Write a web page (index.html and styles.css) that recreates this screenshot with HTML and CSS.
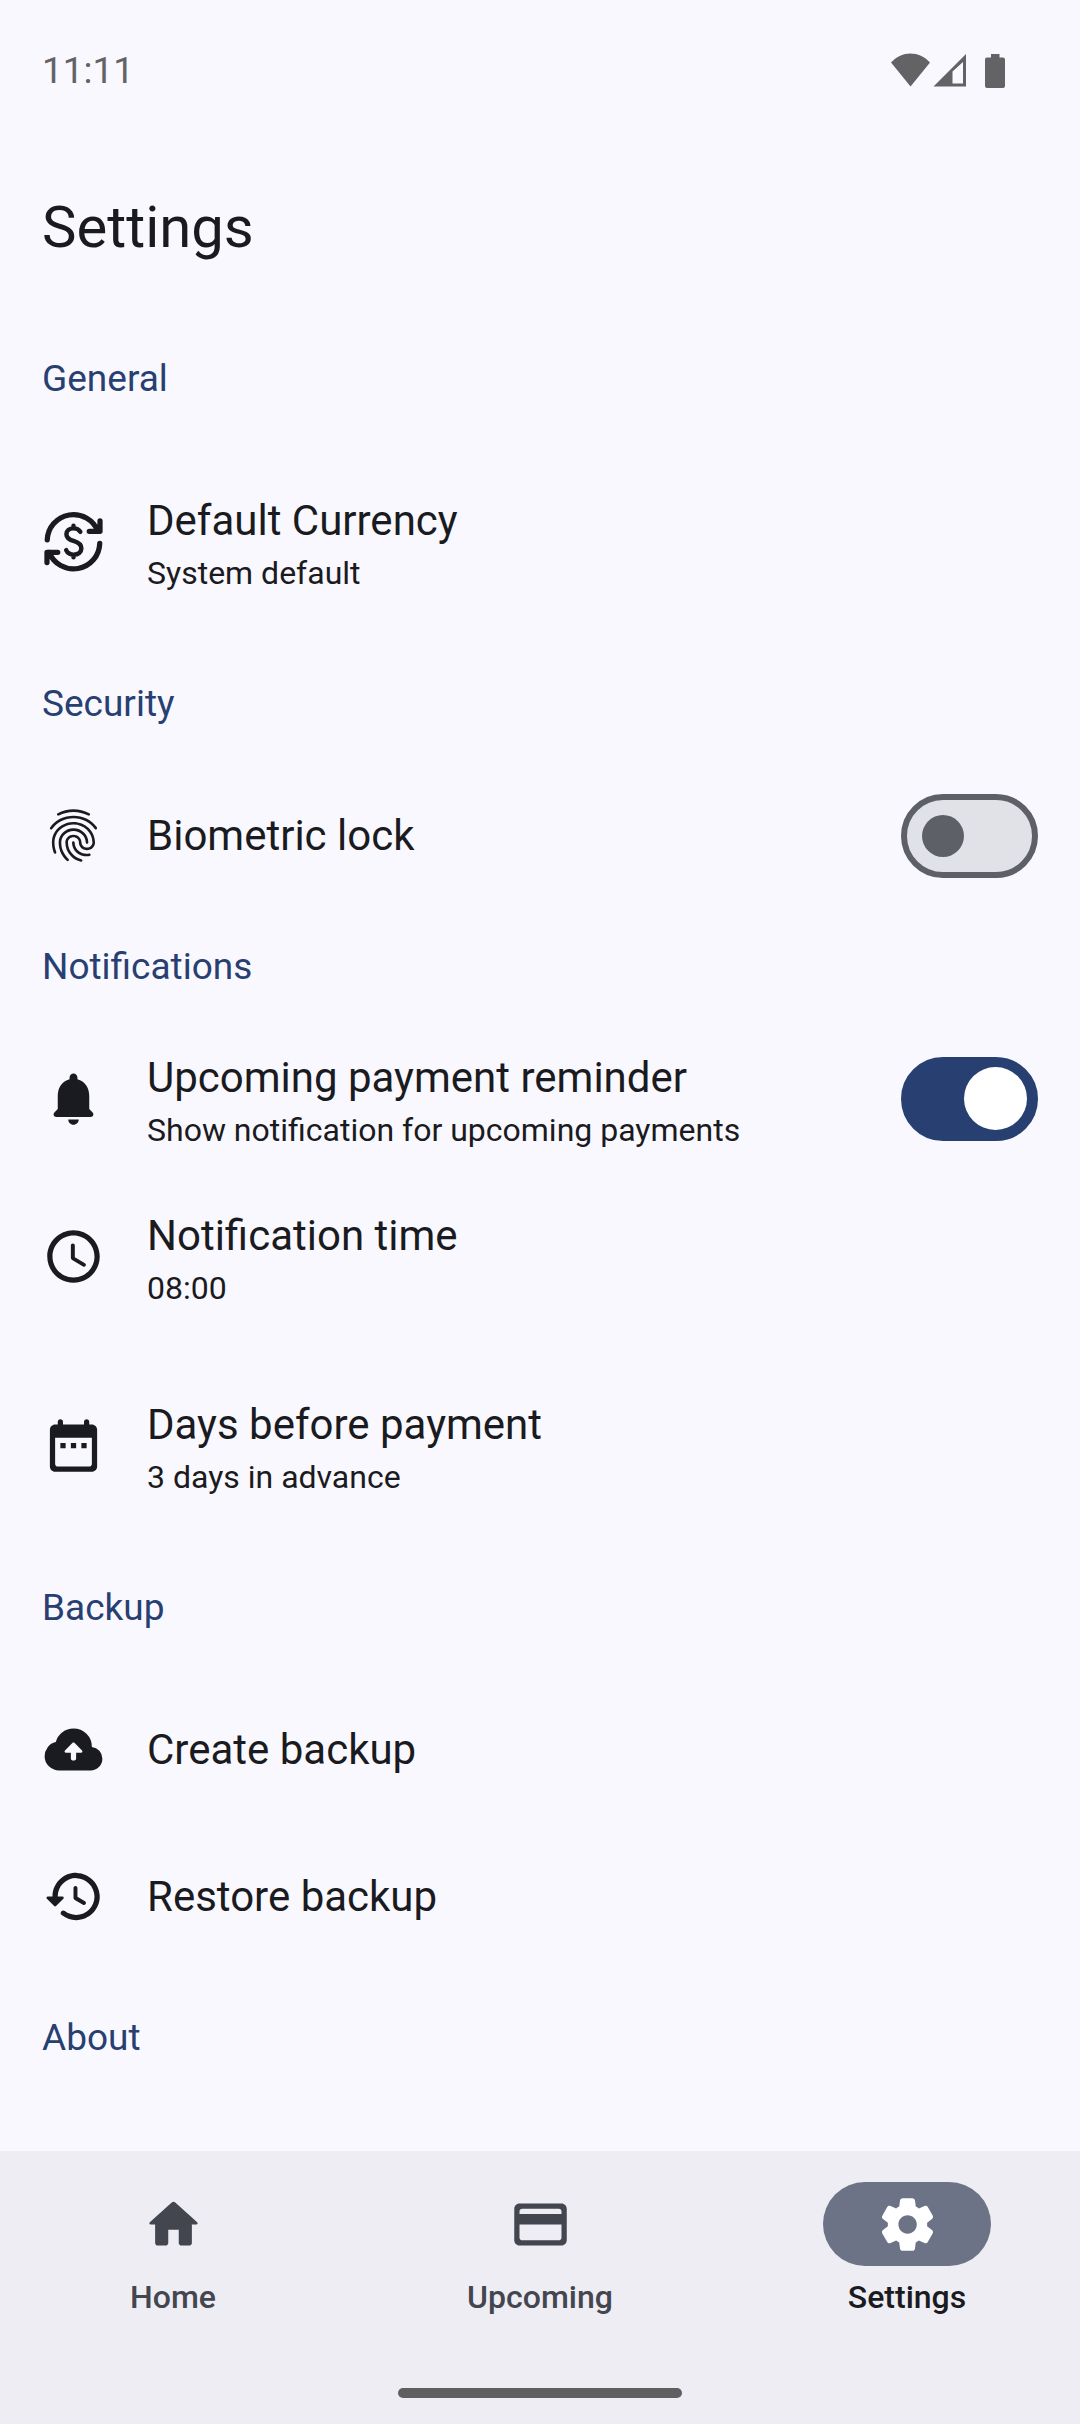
FILE: index.html
```html
<!DOCTYPE html>
<html lang="en">
<head>
<meta charset="utf-8">
<meta name="viewport" content="width=device-width, initial-scale=1">
<title>Settings</title>
<link rel="stylesheet" href="styles.css">
</head>
<body>
<div class="status-bar">
  <span class="clock">11:11</span>
  <svg class="status-icons" viewBox="0 1 116 36" aria-hidden="true">
    <path d="M1 10.500C12-1.500 29-1.500 40 10.500L20.500 34.500z"/>
    <path fill-rule="evenodd" d="M43.500 34.500L76 2V34.500zM62.500 19.500V31.500H73V10z"/>
    <path d="M101 2h8.500v3.500H113a2 2 0 0 1 2 2V34a2 2 0 0 1-2 2H97a2 2 0 0 1-2-2V7.500a2 2 0 0 1 2-2h4z"/>
  </svg>
</div>
<header class="app-bar"><h1 class="app-title">Settings</h1></header>

<main class="content">
  <section>
    <h2 class="section-label">General</h2>
    <button class="row row-tall" type="button">
      <svg class="icon icon-line" viewBox="0 0 24 24" aria-hidden="true">
        <path d="M2 11.400A10 10 0 0 1 21.300 8.100M22.100 4.100V8.100H18M22 12.700A10 10 0 0 1 2.700 16.100M1.900 20V16.100H6"/>
        <path stroke-width="1.700" d="M14.600 8.300C14.100 7.500 13.200 7 12 7c-1.600 0-2.700.9-2.700 2.200 0 1.500 1.200 2.100 2.700 2.600 1.900.6 3 1.300 3 2.800 0 1.500-1.200 2.400-2.900 2.400-1.500 0-2.400-.6-2.900-1.700M12 6v1M12 17v1"/>
      </svg>
      <span class="row-text"><span class="row-title">Default Currency</span><span class="row-sub">System default</span></span>
    </button>
  </section>

  <section>
    <h2 class="section-label">Security</h2>
    <label class="row row-switch">
      <svg class="icon" viewBox="0 0 24 24" aria-hidden="true"><path d="M17.810 4.470c-.08 0-.16-.02-.23-.06C15.660 3.420 14 3 12.010 3c-1.980 0-3.860.47-5.570 1.410-.24.13-.54.04-.68-.2-.13-.24-.04-.55.2-.68C7.820 2.520 9.860 2 12.010 2c2.130 0 3.990.47 6.030 1.520.25.13.34.43.21.67-.09.18-.26.28-.44.28zM3.500 9.720c-.1 0-.2-.03-.29-.09-.23-.16-.28-.47-.12-.7.99-1.400 2.250-2.500 3.750-3.270C9.980 4.040 14 4.030 17.150 5.650c1.500.77 2.760 1.860 3.750 3.250.16.22.11.54-.12.7-.23.16-.54.11-.7-.12-.9-1.260-2.040-2.250-3.390-2.940-2.870-1.470-6.540-1.470-9.400.01-1.360.7-2.500 1.700-3.400 2.960-.08.14-.23.21-.39.21zm6.250 12.070c-.13 0-.26-.05-.35-.15-.87-.87-1.340-1.430-2.010-2.640-.69-1.230-1.050-2.730-1.050-4.340 0-2.970 2.540-5.390 5.660-5.390s5.660 2.420 5.660 5.390c0 .28-.22.5-.5.5s-.5-.22-.5-.5c0-2.420-2.090-4.390-4.660-4.390-2.570 0-4.660 1.970-4.660 4.390 0 1.440.32 2.770.93 3.850.64 1.150 1.080 1.640 1.850 2.420.19.2.19.51 0 .71-.11.1-.24.15-.37.15zm7.170-1.850c-1.190 0-2.240-.3-3.100-.89-1.490-1.010-2.380-2.650-2.380-4.390 0-.28.22-.5.5-.5s.5.22.5.5c0 1.410.72 2.740 1.940 3.560.71.48 1.540.71 2.540.71.24 0 .64-.03 1.040-.1.27-.05.53.13.58.41.05.27-.13.53-.41.58-.57.11-1.070.12-1.210.12zM14.910 22c-.04 0-.09-.01-.13-.02-1.590-.44-2.630-1.030-3.720-2.100-1.400-1.390-2.170-3.240-2.170-5.220 0-1.620 1.380-2.940 3.080-2.940 1.700 0 3.080 1.320 3.080 2.940 0 1.070.93 1.940 2.080 1.940s2.080-.87 2.080-1.940c0-3.770-3.250-6.830-7.250-6.830-2.840 0-5.440 1.580-6.610 4.030-.39.81-.59 1.760-.59 2.800 0 .78.07 2.010.67 3.610.1.26-.03.55-.29.64-.26.1-.55-.04-.64-.29-.49-1.310-.73-2.610-.73-3.960 0-1.200.23-2.290.68-3.240 1.330-2.790 4.280-4.600 7.510-4.600 4.550 0 8.250 3.510 8.250 7.830 0 1.620-1.380 2.940-3.080 2.940s-3.080-1.320-3.080-2.940c0-1.070-.93-1.940-2.080-1.940s-2.080.87-2.080 1.940c0 1.710.66 3.310 1.870 4.510.95.94 1.860 1.460 3.270 1.850.27.07.42.35.35.61-.05.23-.26.38-.47.38z"/></svg>
      <span class="row-text"><span class="row-title">Biometric lock</span></span>
      <input class="switch" type="checkbox" role="switch">
    </label>
  </section>

  <section>
    <h2 class="section-label">Notifications</h2>
    <label class="row row-switch">
      <svg class="icon" viewBox="0 0 24 24" aria-hidden="true"><path d="M12 22c1.100 0 2-.9 2-2h-4c0 1.100.89 2 2 2zm6-6v-5c0-3.070-1.640-5.640-4.500-6.320V4c0-.83-.67-1.500-1.500-1.500s-1.500.67-1.500 1.500v.68C7.630 5.360 6 7.920 6 11v5l-1.290 1.290c-.63.63-.19 1.710.7 1.710h13.170c.89 0 1.340-1.080.71-1.710L18 16z"/></svg>
      <span class="row-text"><span class="row-title">Upcoming payment reminder</span><span class="row-sub">Show notification for upcoming payments</span></span>
      <input class="switch" type="checkbox" role="switch" checked>
    </label>
    <button class="row row-tall" type="button">
      <svg class="icon" viewBox="0 0 24 24" aria-hidden="true"><path d="M11.990 2C6.470 2 2 6.480 2 12s4.470 10 9.990 10C17.520 22 22 17.520 22 12S17.520 2 11.990 2zM12 20c-4.420 0-8-3.580-8-8s3.580-8 8-8 8 3.580 8 8-3.580 8-8 8zm-.22-13h-.06c-.4 0-.72.32-.72.72v4.720c0 .35.18.68.49.86l4.150 2.490c.34.2.78.1.98-.24.21-.34.1-.79-.25-.99l-3.870-2.300V7.720c0-.4-.32-.72-.72-.72z"/></svg>
      <span class="row-text"><span class="row-title">Notification time</span><span class="row-sub">08:00</span></span>
    </button>
    <button class="row row-tall" type="button">
      <svg class="icon" viewBox="0 0 24 24" aria-hidden="true"><path d="M19 4h-1V3c0-.55-.45-1-1-1s-1 .45-1 1v1H8V3c0-.55-.45-1-1-1s-1 .45-1 1v1H5c-1.110 0-1.990.9-1.990 2L3 20c0 1.100.89 2 2 2h14c1.100 0 2-.9 2-2V6c0-1.100-.9-2-2-2zm0 15c0 .55-.45 1-1 1H6c-.55 0-1-.45-1-1V9h14v10zM7 11h2v2H7zm4 0h2v2h-2zm4 0h2v2h-2z"/></svg>
      <span class="row-text"><span class="row-title">Days before payment</span><span class="row-sub">3 days in advance</span></span>
    </button>
  </section>

  <section>
    <h2 class="section-label">Backup</h2>
    <button class="row row-single" type="button">
      <svg class="icon" viewBox="0 0 24 24" aria-hidden="true"><path fill-rule="evenodd" d="M6.500 20q-2.275 0-3.887-1.575Q1 16.850 1 14.575q0-1.950 1.175-3.475Q3.350 9.575 5.250 9.150q.625-2.300 2.500-3.725Q9.625 4 12 4q2.925 0 4.963 2.037Q19 8.075 19 11q1.725.2 2.863 1.487Q23 13.775 23 15.500q0 1.875-1.312 3.188Q20.375 20 18.500 20ZM11 13.200H9.100c-.45 0-.67-.53-.35-.85l2.900-2.900c.2-.2.5-.2.7 0l2.900 2.900c.31.31.09.85-.35.85H13v2.300c0 .45-.4.7-1 .7s-1-.25-1-.7z"/></svg>
      <span class="row-text"><span class="row-title">Create backup</span></span>
    </button>
    <button class="row row-single" type="button">
      <svg class="icon" viewBox="0 0 24 24" aria-hidden="true"><path d="M13.260 3C8.170 2.860 4 6.950 4 12H2.210c-.45 0-.67.54-.35.85l2.790 2.800c.2.2.51.2.71 0l2.790-2.800c.31-.31.09-.85-.36-.85H6c0-3.900 3.180-7.050 7.100-7 3.720.05 6.850 3.180 6.900 6.900.05 3.910-3.100 7.100-7 7.100-1.610 0-3.100-.55-4.280-1.480-.4-.31-.96-.28-1.320.08-.42.42-.39 1.130.08 1.490C9 20.290 10.910 21 13 21c5.050 0 9.140-4.170 9-9.260-.13-4.690-4.050-8.610-8.740-8.740zm-.51 5c-.41 0-.75.34-.75.75v3.680c0 .35.19.68.49.86l3.120 1.850c.36.21.82.09 1.030-.26.21-.36.09-.82-.26-1.030l-2.880-1.710v-3.400c0-.4-.34-.74-.75-.74z"/></svg>
      <span class="row-text"><span class="row-title">Restore backup</span></span>
    </button>
  </section>

  <section>
    <h2 class="section-label">About</h2>
  </section>
</main>

<footer class="bottom">
  <nav class="tabs" aria-label="Main">
    <a class="tab" href="#home">
      <span class="tab-pill"><svg class="icon" viewBox="0 0 24 24" aria-hidden="true"><path d="M10 19v-5h4v5c0 .55.45 1 1 1h3c.55 0 1-.45 1-1v-7h1.700c.46 0 .68-.57.33-.87L12.670 3.600c-.38-.34-.96-.34-1.340 0l-8.360 7.530c-.34.3-.13.87.33.87H5v7c0 .55.45 1 1 1h3c.55 0 1-.45 1-1z"/></svg></span>
      <span class="tab-label">Home</span>
    </a>
    <a class="tab" href="#upcoming">
      <span class="tab-pill"><svg class="icon" viewBox="0 0 24 24" aria-hidden="true"><path fill-rule="evenodd" d="M20 4H4c-1.110 0-1.990.89-1.990 2L2 18c0 1.110.89 2 2 2h16c1.110 0 2-.89 2-2V6c0-1.110-.89-2-2-2zm-1 14H5c-.55 0-1-.45-1-1v-5h16v5c0 .55-.45 1-1 1zM4 8V7c0-.55.45-1 1-1h14c.55 0 1 .45 1 1v1z"/></svg></span>
      <span class="tab-label">Upcoming</span>
    </a>
    <a class="tab tab-active" href="#settings" aria-current="page">
      <span class="tab-pill"><svg class="icon" viewBox="0 0 24 24" aria-hidden="true"><path d="M19.500 12c0-.23-.01-.45-.03-.68l1.860-1.410c.4-.3.51-.86.26-1.300l-1.870-3.230c-.25-.44-.79-.62-1.250-.42l-2.150.91c-.37-.26-.76-.49-1.170-.68l-.29-2.310c-.06-.5-.49-.88-.99-.88h-3.730c-.51 0-.94.38-1 .88l-.29 2.310c-.41.19-.8.42-1.170.68l-2.150-.91c-.46-.2-1-.02-1.250.42L2.410 8.620c-.25.44-.14.99.26 1.300l1.860 1.410c-.02.22-.03.44-.03.67s.01.45.03.68l-1.860 1.410c-.4.3-.51.86-.26 1.300l1.870 3.230c.25.44.79.62 1.250.42l2.150-.91c.37.26.76.49 1.170.68l.29 2.310c.06.5.49.88.99.88h3.730c.5 0 .93-.38.99-.88l.29-2.310c.41-.19.8-.42 1.170-.68l2.150.91c.46.2 1 .02 1.250-.42l1.870-3.230c.25-.44.14-.99-.26-1.300l-1.860-1.410c.03-.23.04-.45.04-.68zm-7.460 3.500c-1.930 0-3.500-1.570-3.500-3.500s1.570-3.500 3.500-3.500 3.500 1.570 3.500 3.500-1.570 3.500-3.500 3.500z"/></svg></span>
      <span class="tab-label">Settings</span>
    </a>
  </nav>
  <div class="gesture-bar"></div>
</footer>
</body>
</html>
```
FILE: styles.css
```css
:root {
  --surface: #faf8ff;
  --bar: #eeedf3;
  --ink: #1a1b20;
  --ink-soft: #43464f;
  --primary: #284071;
  --outline: #5d6067;
  --track: #e1e2e8;
  --pill: #6d7387;
  --system: #636365;
}

* {
  box-sizing: border-box;
}

body {
  display: flex;
  flex-direction: column;
  min-height: 100vh;
  margin: 0;
  background: var(--surface);
  color: var(--ink);
  font-family: Roboto, "Liberation Sans", sans-serif;
}

.status-bar {
  display: flex;
  align-items: center;
  justify-content: space-between;
  height: 142px;
  padding: 0 74px 0 42px;
  color: var(--system);
  font-size: 37px;
  line-height: 52px;
}

.status-icons {
  width: 116px;
  height: 36px;
  fill: currentColor;
}

.app-bar {
  display: flex;
  align-items: center;
  height: 169px;
  padding: 0 42px;
}

.app-title {
  margin: 0;
  font-size: 58px;
  font-weight: 400;
  line-height: 74px;
}

.content {
  flex: 1;
}

.section-label {
  margin: 0;
  padding: 42px;
  color: var(--primary);
  font-size: 37px;
  font-weight: 400;
  line-height: 52px;
}

.row {
  display: flex;
  align-items: center;
  gap: 42px;
  width: 100%;
  padding: 0 42px;
  border: 0;
  background: none;
  color: inherit;
  font: inherit;
  text-align: left;
}

.row-tall {
  min-height: 189px;
}

.row-single {
  min-height: 147px;
}

.row-switch {
  min-height: 127px;
}

.row-text {
  display: flex;
  flex: 1;
  flex-direction: column;
}

.row-title {
  font-size: 42px;
  line-height: 62px;
}

.row-sub {
  font-size: 32px;
  line-height: 42px;
}

.icon {
  flex: none;
  width: 63px;
  height: 63px;
  fill: currentColor;
}

.icon-line {
  fill: none;
  stroke: currentColor;
  stroke-width: 2;
  stroke-linecap: round;
  stroke-linejoin: round;
}

.switch {
  display: flex;
  flex: none;
  align-items: center;
  width: 137px;
  height: 84px;
  margin: 0;
  padding: 0 15px;
  border: 6px solid var(--outline);
  border-radius: 42px;
  background: var(--track);
  appearance: none;
}

.switch::before {
  width: 42px;
  height: 42px;
  border-radius: 50%;
  background: var(--outline);
  content: "";
}

.switch:checked {
  justify-content: flex-end;
  padding: 0 5px;
  border-color: var(--primary);
  background: var(--primary);
}

.switch:checked::before {
  width: 63px;
  height: 63px;
  background: #fff;
}

.bottom {
  position: sticky;
  bottom: 0;
  display: flex;
  flex-direction: column;
  align-items: center;
  gap: 70px;
  padding: 31px 0 26px;
  background: var(--bar);
}

.tabs {
  display: grid;
  grid-template-columns: repeat(3, 1fr);
  gap: 21px;
  width: 100%;
}

.tab {
  display: flex;
  flex-direction: column;
  align-items: center;
  gap: 10px;
  color: var(--ink-soft);
  text-decoration: none;
}

.tab-pill {
  display: flex;
  align-items: center;
  justify-content: center;
  width: 168px;
  height: 84px;
  border-radius: 42px;
}

.tab-label {
  font-size: 32px;
  font-weight: 500;
  line-height: 42px;
}

.tab-active {
  color: var(--ink);
}

.tab-active .tab-pill {
  background: var(--pill);
  color: #fff;
}

.gesture-bar {
  width: 284px;
  height: 10px;
  border-radius: 5px;
  background: #5f5f61;
}
```
